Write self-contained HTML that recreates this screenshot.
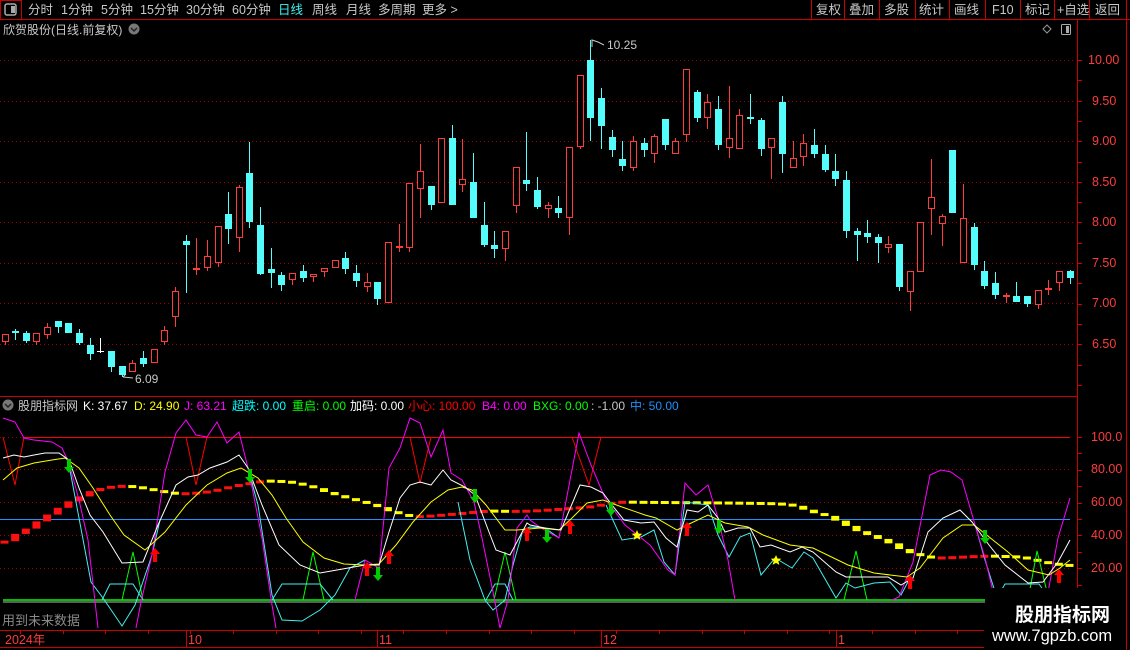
<!DOCTYPE html>
<html><head><meta charset="utf-8"><style>
html,body{margin:0;padding:0;background:#000;width:1130px;height:650px;overflow:hidden}
svg{display:block}
text{font-family:"Liberation Sans","Noto Sans CJK SC",sans-serif}
</style></head><body>
<svg id="s" width="1130" height="650" font-size="12" xmlns="http://www.w3.org/2000/svg">
<rect width="1130" height="650" fill="#000"/>
<rect x="0.5" y="0.5" width="21" height="19" fill="none" stroke="#c00" />
<rect x="5" y="4" width="11" height="11" rx="2" fill="none" stroke="#aaa" stroke-width="1.5"/>
<rect x="11" y="6" width="4" height="7" fill="#aaa"/>
<line x1="0" y1="19.5" x2="1130" y2="19.5" stroke="#c00"/>
<g fill="#c8c8c8" font-size="12.5">
<text x="28" y="14">分时</text><text x="61" y="14">1分钟</text><text x="101" y="14">5分钟</text><text x="140" y="14">15分钟</text><text x="186" y="14">30分钟</text><text x="232" y="14">60分钟</text><text x="278" y="14" fill="#40f0f0">日线</text><text x="312" y="14">周线</text><text x="346" y="14">月线</text><text x="378" y="14">多周期</text><text x="422" y="14">更多 &gt;</text>
<text x="816" y="14">复权</text><text x="849" y="14">叠加</text><text x="884" y="14">多股</text><text x="919" y="14">统计</text><text x="954" y="14">画线</text><text x="992" y="14">F10</text><text x="1025" y="14">标记</text><text x="1057" y="14">+自选</text><text x="1095" y="14">返回</text>
</g>
<g stroke="#c00"><line x1="811.5" y1="0" x2="811.5" y2="19"/><line x1="844.5" y1="0" x2="844.5" y2="19"/><line x1="879.5" y1="0" x2="879.5" y2="19"/><line x1="915.5" y1="0" x2="915.5" y2="19"/><line x1="949.5" y1="0" x2="949.5" y2="19"/><line x1="985.5" y1="0" x2="985.5" y2="19"/><line x1="1020.5" y1="0" x2="1020.5" y2="19"/><line x1="1054.5" y1="0" x2="1054.5" y2="19"/><line x1="1089.5" y1="0" x2="1089.5" y2="19"/><line x1="1126.5" y1="0" x2="1126.5" y2="650"/></g>
<text x="3" y="34" fill="#c8c8c8" font-size="12">欣贺股份(日线.前复权)</text>
<circle cx="134" cy="29" r="5.5" fill="#777"/><path d="M131 28 L134 31 L137 28" stroke="#222" stroke-width="1.5" fill="none"/>
<path d="M1047 25 L1051 29 L1047 33 L1043 29 Z" stroke="#999" fill="none"/>
<rect x="1061.5" y="24.5" width="9" height="10" rx="1" fill="none" stroke="#aaa"/><rect x="1066" y="26" width="3" height="7" fill="#aaa"/>
<line x1="1077.5" y1="20" x2="1077.5" y2="647" stroke="#c00"/>
<line x1="0" y1="396.5" x2="1077" y2="396.5" stroke="#c00"/>
<g id="grid" stroke="#a00000" stroke-dasharray="1,3"></g>
<g id="axt" stroke="#c00"></g>
<g fill="#ff3c3c" font-size="12.5">
<text x="1088" y="64">10.00</text><text x="1092" y="105">9.50</text><text x="1092" y="145">9.00</text><text x="1092" y="186">8.50</text><text x="1092" y="226">8.00</text><text x="1092" y="267">7.50</text><text x="1092" y="307">7.00</text><text x="1092" y="348">6.50</text>
<text x="1091" y="441">100.0</text><text x="1091" y="473">80.00</text><text x="1091" y="506">60.00</text><text x="1091" y="539">40.00</text><text x="1091" y="572">20.00</text>
</g>
<g id="candles"></g>
<text x="607" y="49" fill="#c8c8c8">10.25</text><path d="M592 47 L592 40 L598 42 L604 45" stroke="#c8c8c8" fill="none"/>
<text x="135" y="383" fill="#c8c8c8">6.09</text><path d="M123 377 L133 378 M123 377 L126 374" stroke="#c8c8c8" fill="none"/>
<circle cx="8" cy="405" r="5.5" fill="#777"/><path d="M5 404 L8 407 L11 404" stroke="#222" stroke-width="1.5" fill="none"/>
<g font-size="12">
<text x="18" y="410" fill="#c8c8c8">股朋指标网</text>
<text x="83" y="410" fill="#fff">K: 37.67</text>
<text x="134" y="410" fill="#ff0">D: 24.90</text>
<text x="184" y="410" fill="#f0f">J: 63.21</text>
<text x="232" y="410" fill="#0ff">超跌: 0.00</text>
<text x="292" y="410" fill="#0f0">重启: 0.00</text>
<text x="350" y="410" fill="#fff">加码: 0.00</text>
<text x="408" y="410" fill="#f00">小心: 100.00</text>
<text x="482" y="410" fill="#f0f">B4: 0.00</text>
<text x="533" y="410" fill="#0f0">BXG: 0.00</text>
<text x="591" y="410" fill="#c8c8c8">: -1.00</text>
<text x="630" y="410" fill="#1e90ff">中: 50.00</text>
</g>
<line x1="24" y1="437.5" x2="1070" y2="437.5" stroke="#f00"/>
<line x1="0" y1="519.5" x2="1070" y2="519.5" stroke="#1e90ff"/>
<line x1="3" y1="602" x2="1070" y2="602" stroke="#bbb"/>
<line x1="3" y1="600" x2="1070" y2="600" stroke="#0f0" stroke-width="1.5"/>
<g id="ma"></g>
<g fill="none" stroke-width="1">
<polyline stroke="#f00" points="3,437 15,485 24,437"/>
<polyline stroke="#f00" points="186,437 196,485 207,437"/>
<polyline stroke="#f00" points="410,437 420,483 431,437"/>
<polyline stroke="#f00" points="572,437 589,485 601,437"/>
<polyline stroke="#0f0" points="122,600 133,552 143,600"/>
<polyline stroke="#0f0" points="303,600 313,552 324,600"/>
<polyline stroke="#0f0" points="494,600 505,552 516,600"/>
<polyline stroke="#0f0" points="844,600 856,551 867,600"/>
<polyline stroke="#0f0" points="1028,600 1037,551 1049,600"/>
<polyline stroke="#4ee" points="69,465 79,518 91,582 103,598 122,626 135,605 152,555 160,520"/>
<polyline stroke="#4ee" points="102,600 110,584 133,584 143,600"/>
<polyline stroke="#4ee" points="248,468 258,505 272,595 282,620 302,621 320,610 335,595 350,568 365,560"/>
<polyline stroke="#4ee" points="272,600 282,584 320,584 333,600"/>
<polyline stroke="#4ee" points="458,502 470,560 485,600 493,610 505,600 513,565 523,530 530,527 545,528 559,538"/>
<polyline stroke="#4ee" points="486,600 495,584 505,584 513,600"/>
<polyline stroke="#4ee" points="606,505 622,540 641,537 654,530 664,562 675,575 685,502 708,505 718,535 729,557 740,537 750,533 761,575 775,558 792,568 804,552 813,558 836,598 846,583 855,588 874,583 890,582 901,595 909,580 913,578"/>
<polyline stroke="#4ee" points="976,528 985,560 997,598 1005,584 1039,584 1049,598"/>
<polyline stroke="#f0f" points="3,418 15,422 24,438 34,440 52,442 62,448 69,463 79,500 88,540 98,628"/>
<polyline stroke="#f0f" points="136,628 141,602 152,555 165,472 176,433 186,420 196,435 207,437 217,422 227,443 239,432 248,468 253,492 262,538 272,605 276,628"/>
<polyline stroke="#f0f" points="355,600 365,560 379,568 389,468 400,448 410,418 420,423 431,457 443,430 451,473 462,480 474,502 482,538 493,592 500,628 508,600 517,528 527,515 530,520 541,528 559,538 579,433 591,465 605,498 625,525 650,545 668,570 675,575 685,483 696,495 708,485 718,518 728,560 735,600"/>
<polyline stroke="#f0f" points="892,600 899,597 913,562 930,475 941,470 951,472 962,480 976,528 985,558 995,600"/>
<polyline stroke="#f0f" points="1042,600 1047,598 1058,538 1070,498"/>
<polyline stroke="#ff0" points="3,480 17,468 34,463 52,460 65,458 79,468 93,488 110,515 124,535 145,550 165,532 186,505 207,485 227,473 241,468 258,478 272,495 286,518 303,542 324,558 344,564 365,565 379,564 396,545 413,522 431,502 448,490 462,487 472,490 486,505 505,530 517,530 540,528 559,530 572,518 587,503 603,500 622,507 645,515 656,518 677,530 687,525 708,515 725,523 748,527 763,535 790,545 813,548 848,565 874,573 907,577 920,568 943,538 962,525 974,525 1008,552 1028,570 1049,575 1060,568 1070,560"/>
<polyline stroke="#fff" points="3,458 14,455 24,457 34,455 45,453 59,453 69,460 79,488 90,515 103,532 122,563 143,562 158,525 176,485 188,477 198,475 210,468 227,462 239,455 248,468 262,505 279,545 300,565 320,573 337,570 365,565 379,565 389,532 400,498 410,485 420,482 431,485 443,470 451,480 465,487 475,495 489,532 496,550 510,555 527,523 530,525 545,528 561,530 580,485 591,487 603,493 612,505 624,520 641,523 654,522 666,538 677,547 687,510 698,512 708,505 718,518 725,532 738,528 750,528 760,547 771,545 790,552 802,547 813,552 836,572 846,577 888,577 901,585 913,578 928,532 943,518 960,510 972,522 989,545 1005,565 1028,583 1043,582 1058,562 1070,540"/>
</g>
<g id="arrows"></g>
<path d="M637 530 l1.5 3.5 l3.8 .3 l-2.9 2.4 l1 3.7 l-3.4 -2 l-3.4 2 l1 -3.7 l-2.9 -2.4 l3.8 -.3 z" fill="#ff0"/>
<path d="M776 555 l1.5 3.5 l3.8 .3 l-2.9 2.4 l1 3.7 l-3.4 -2 l-3.4 2 l1 -3.7 l-2.9 -2.4 l3.8 -.3 z" fill="#ff0"/>
<text x="2" y="625" fill="#8a8a8a" font-size="13">用到未来数据</text>
<line x1="0" y1="630.5" x2="984" y2="630.5" stroke="#c00"/>
<line x1="0" y1="647.5" x2="984" y2="647.5" stroke="#c00"/>
<g id="tticks" stroke="#c00"></g>
<g fill="#ff3c3c" font-size="12.5"><text x="5" y="644">2024年</text><text x="188" y="644">10</text><text x="379" y="644">11</text><text x="603" y="644">12</text><text x="838" y="644">1</text></g>
<rect x="985" y="588" width="141" height="62" fill="#000"/>
<text x="1015" y="621" fill="#fff" font-size="19" font-weight="bold">股朋指标网</text>
<text x="992" y="641" fill="#fff" font-size="16.5">www.7gpzb.com</text>
</svg>
<script>
(function(){
var NS="http://www.w3.org/2000/svg";
function el(p,t,a){var e=document.createElementNS(NS,t);for(var k in a)e.setAttribute(k,a[k]);document.getElementById(p).appendChild(e);return e;}
[60,101,141,182,222,263,303,344].forEach(function(y){el("grid","line",{x1:0,x2:1075,y1:y+.5,y2:y+.5});});
[469,502,535,568].forEach(function(y){el("grid","line",{x1:0,x2:1070,y1:y+.5,y2:y+.5});});
el("grid","line",{x1:0,x2:24,y1:437.5,y2:437.5});
for(var y=60;y<=390;y+=20.3){el("axt","line",{x1:1078,x2:1082,y1:Math.round(y)+.5,y2:Math.round(y)+.5});}
for(var y=437;y<=600;y+=16.4){el("axt","line",{x1:1078,x2:1082,y1:Math.round(y)+.5,y2:Math.round(y)+.5});}
var D="r 334 342 334 345|c 331 333 329 340|c 333 341 331 343|r 333 342 333 345|r 327 335 323 339|c 321 327 321 333|c 323 333 323 333|c 333 343 329 345|c 345 354 338 360|w 351 352 338 353|c 351 367 351 372|c 366 375 366 377|r 363 372 360 372|c 358 364 351 367|r 349 363 349 363|r 330 342 326 345|r 291 317 287 327|c 241 245 235 293|r 268 269 238 275|r 256 268 240 271|r 226 263 226 267|c 214 229 192 244|r 187 238 185 252|c 173 222 142 228|c 225 274 207 275|c 269 273 248 288|c 275 285 272 291|r 273 280 273 285|c 271 278 265 282|r 274 277 274 282|r 268 272 268 277|r 260 268 260 268|c 258 269 252 274|c 273 281 265 287|r 282 287 273 292|c 282 299 282 305|r 242 303 242 303|r 246 247 224 252|r 183 248 183 252|r 171 189 144 218|c 186 205 186 210|r 138 203 138 203|c 138 205 125 205|r 179 185 139 192|c 182 218 153 218|c 225 245 202 247|c 245 249 231 258|r 231 249 231 261|r 167 206 167 213|c 180 184 132 191|c 190 207 177 209|r 205 209 202 218|c 208 213 196 218|r 147 218 147 235|r 75 147 75 149|c 60 118 40 141|c 98 126 88 149|c 137 150 130 157|c 159 166 141 171|r 141 168 136 171|c 143 150 138 157|r 136 154 134 163|c 119 145 119 150|r 141 154 138 154|r 69 135 69 142|c 92 118 90 122|r 102 118 94 129|c 109 145 96 150|r 138 148 86 158|r 115 149 109 149|c 117 118 94 124|c 120 149 118 156|r 138 148 138 179|c 102 154 96 173|r 158 168 141 168|r 143 157 134 166|c 145 154 129 158|c 154 170 145 172|c 171 179 154 186|c 180 231 171 238|c 231 235 228 261|c 233 237 220 243|c 237 243 234 263|r 244 248 236 253|c 244 287 244 291|r 271 292 271 311|r 222 272 222 272|r 197 209 159 235|r 216 224 214 246|c 150 213 150 213|r 218 263 184 263|c 227 265 223 270|c 271 286 261 289|c 283 295 272 299|r 295 296 293 303|c 296 302 282 302|c 296 304 296 307|r 290 305 290 309|r 288 289 280 295|r 271 283 271 291|c 271 278 270 284".split("|");
D.forEach(function(s,i){var a=s.split(" "),t=a[0],bt=+a[1],bb=+a[2],hi=+a[3],lo=+a[4];var x=Math.round(4.5+i*10.65);
 var col=t=="r"?"#ff3c3c":(t=="c"?"#54fcfc":"#fff");
 el("candles","line",{x1:x+.5,x2:x+.5,y1:hi,y2:lo,stroke:col});
 if(t=="r"){ if(bb-bt<=1){el("candles","rect",{x:x-3,y:bt,width:7,height:2,fill:col});} else el("candles","rect",{x:x-2.5,y:bt+.5,width:6,height:bb-bt-1,fill:"#000",stroke:col});}
 else if(t=="c"){el("candles","rect",{x:x-3,y:bt,width:7,height:Math.max(2,bb-bt),fill:col});}
 else {el("candles","rect",{x:x-3,y:bt,width:7,height:1,fill:col});}
});
var K=[[0,543],[5,541],[15,534],[27,528],[37,521],[48,514],[59,507],[69,501],[80,496],[90,491],[100,488],[112,486.5],[125,486],[140,488],[160,492],[176,494],[190,493.5],[210,491],[230,486],[248,483],[260,481],[280,481.5],[293,483],[313,488],[324,492],[334,495],[344,498],[356,501],[367,504],[377,507],[387,511],[398,514],[410,517],[420,516.5],[440,515],[473,512],[484,511],[510,511.5],[530,511],[560,509],[587,507],[606,503],[618,502],[633,502.3],[720,503],[760,503.5],[779,504],[794,506],[804,510],[813,513],[825,516],[836,521],[846,526],[856,531],[867,535],[878,539],[890,544],[899,549],[909,553],[920,556],[930,558],[941,558],[960,557],[985,556],[1000,556.5],[1016,557],[1027,559],[1039,562],[1050,564],[1060,565],[1070,566]];
function iv(x){for(var i=1;i<K.length;i++){if(x<=K[i][0]){var a=K[i-1],b=K[i];return a[1]+(b[1]-a[1])*(x-a[0])/(b[0]-a[0]);}}return K[K.length-1][1];}
var prev=iv(0);
for(var i=0;i<101;i++){var x=4.5+i*10.65;var v=iv(x);var dy=v-prev;var yt=Math.min(v,prev),h=Math.abs(dy);if(h<3){yt=(v+prev)/2-1.5;h=3;}
 el("ma","rect",{x:x-4,y:yt,width:8,height:h,fill:dy<0?"#ff1010":"#ffff00"});prev=v;}
function up(x,y){el("arrows","path",{d:"M"+x+" "+(y-8)+" l5 6 h-3 v8 h-4 v-8 h-3 z",fill:"#f00"});}
function dn(x,y){el("arrows","path",{d:"M"+x+" "+(y+8)+" l5 -6 h-3 v-8 h-4 v8 h-3 z",fill:"#0c0"});}
[[155,556],[367,570],[389,558],[527,535],[570,528],[687,530],[910,583],[1059,577]].forEach(function(p){up(p[0],p[1]);});
[[69,465],[250,475],[378,573],[475,495],[547,535],[611,508],[719,526],[985,536]].forEach(function(p){dn(p[0],p[1]);});
[186,377,601,836].forEach(function(x){el("tticks","line",{x1:x+.5,x2:x+.5,y1:630,y2:647});});
for(var x=20;x<984;x+=42.6){el("tticks","line",{x1:Math.round(x)+.5,x2:Math.round(x)+.5,y1:630,y2:634});}
})();
</script>
</body></html>
